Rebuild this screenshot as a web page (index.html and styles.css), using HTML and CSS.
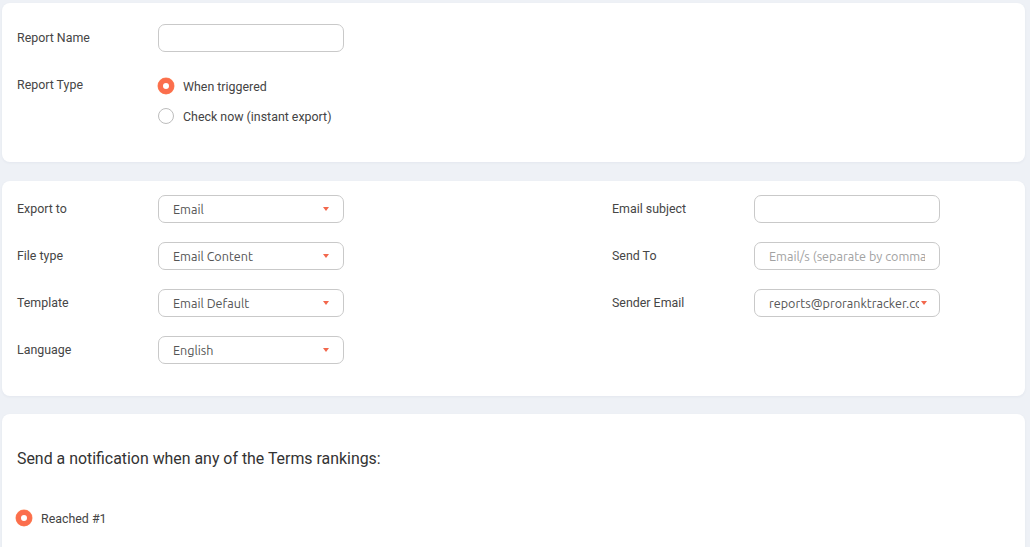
FILE: index.html
```html
<!DOCTYPE html>
<html lang="en">
<head>
  <meta charset="UTF-8" />
  <meta name="viewport" content="width=device-width, initial-scale=1.0" />
  <title>Report settings</title>
  <link rel="stylesheet" href="styles.css">
</head>
<body>
  <div class="card card-name">
    <div class="form-row">
      <label class="form-label" for="reportName">Report Name</label>
      <input type="text" id="reportName" class="field">
    </div>
    <div class="form-row row-type">
      <span class="form-label">Report Type</span>
      <div class="radio-list">
        <div class="radio-item"><span class="radio checked"></span>When triggered</div>
        <div class="radio-item"><span class="radio"></span>Check now (instant export)</div>
      </div>
    </div>
  </div>

  <div class="card card-export">
    <div class="col">
      <div class="form-row">
        <span class="form-label">Export to</span>
        <div class="field select"><span class="value">Email</span><span class="caret"></span></div>
      </div>
      <div class="form-row">
        <span class="form-label">File type</span>
        <div class="field select"><span class="value">Email Content</span><span class="caret"></span></div>
      </div>
      <div class="form-row">
        <span class="form-label">Template</span>
        <div class="field select"><span class="value">Email Default</span><span class="caret"></span></div>
      </div>
      <div class="form-row">
        <span class="form-label">Language</span>
        <div class="field select"><span class="value">English</span><span class="caret"></span></div>
      </div>
    </div>
    <div class="col col-right">
      <div class="form-row">
        <span class="form-label">Email subject</span>
        <input type="text" class="field">
      </div>
      <div class="form-row">
        <span class="form-label">Send To</span>
        <input type="text" class="field" placeholder="Email/s (separate by comma)">
      </div>
      <div class="form-row">
        <span class="form-label">Sender Email</span>
        <div class="field select narrow"><span class="value">reports@proranktracker.com</span><span class="caret"></span></div>
      </div>
    </div>
  </div>

  <div class="card card-notify">
    <div class="notify-title">Send a notification when any of the Terms rankings:</div>
    <div class="radio-item"><span class="radio checked"></span>Reached #1</div>
  </div>
</body>
</html>
```

FILE: styles.css
```css
body {
  margin: 0;
  padding: 3px 5px 0 2px;
  background-color: #eef1f6;
  font-family: Roboto, "Liberation Sans", sans-serif;
  color: #464646;
  font-size: 12.4px;
  overflow: hidden;
  height: 544px;
}

.card {
  background-color: #fff;
  border-radius: 8px;
  padding-left: 15px;
  box-shadow: 0 1px 3px rgba(40, 60, 100, 0.05);
}

.card-name {
  padding-top: 21px;
  padding-bottom: 35px;
}

.card-export {
  margin-top: 19px;
  padding-top: 14px;
  padding-bottom: 32px;
  display: flex;
}

.card-notify {
  margin-top: 18px;
  padding-top: 34px;
  padding-bottom: 40px;
}

.form-row {
  display: flex;
  align-items: center;
  margin-bottom: 19px;
}

.col .form-row:last-child {
  margin-bottom: 0;
}

.form-label {
  width: 141px;
  flex-shrink: 0;
  line-height: 26px;
}

.row-type {
  align-items: flex-start;
  margin-bottom: 0;
  margin-top: 23px;
}

.row-type .form-label {
  line-height: 20px;
}

.col {
  width: 595px;
}

.col-right {
  width: auto;
}

.col-right .form-label {
  width: 142px;
}

.field {
  box-sizing: border-box;
  width: 186px;
  height: 28px;
  border: 1px solid #c9c9c9;
  border-radius: 7px;
  background: #fff;
  padding: 0 14px;
  font-family: Ubuntu, "Open Sans", "Noto Sans", sans-serif;
  font-size: 12.6px;
  color: #555;
  outline: none;
}

.field::placeholder {
  color: #a2a2a2;
}

.select {
  display: flex;
  align-items: center;
  justify-content: space-between;
}

.select .value {
  white-space: nowrap;
  overflow: hidden;
  flex: 1;
}

.select .caret {
  width: 0;
  height: 0;
  border-left: 3.5px solid transparent;
  border-right: 3.5px solid transparent;
  border-top: 4px solid #f2674c;
  margin-left: 6px;
}

.narrow .value {
  margin-right: -4px;
}

.narrow .caret {
  margin-right: -2px;
}

.radio-list {
  display: flex;
  flex-direction: column;
  gap: 8px;
}

.radio-item {
  display: flex;
  align-items: center;
  height: 22px;
  color: #444;
}

.radio {
  box-sizing: border-box;
  width: 16px;
  height: 16px;
  border-radius: 50%;
  border: 1px solid #bdbdbd;
  background: #fff;
  margin-right: 9px;
}

.radio.checked {
  border: 5px solid #fb6e4d;
  background: #fff;
  box-shadow: 0 0 0 0.5px #ff8a5c;
}

.notify-title {
  font-size: 15.9px;
  color: #333;
  line-height: 22px;
  margin-bottom: 37px;
}

.card-notify .radio {
  margin-left: -1px;
}
```
